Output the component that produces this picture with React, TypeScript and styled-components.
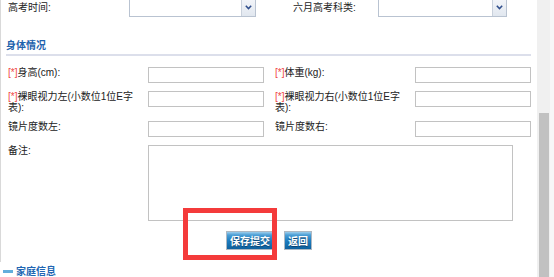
import React from 'react';
import styled, { createGlobalStyle } from 'styled-components';

const GlobalStyle = createGlobalStyle`
    html, body {
        margin: 0;
        padding: 0;
        background: #fff;
        overflow: hidden;
    }

    body {
        font-family: "Liberation Sans", "Noto Sans CJK SC", sans-serif;
        font-size: 10px;
        color: #222;
    }
`;

const Frame = styled.div`
    display: flex;
    width: 554px;
    height: 277px;
    overflow: hidden;
`;

const Content = styled.div`
    position: relative;
    flex: 1;
    min-width: 0;
    overflow: hidden;
`;

// the page is scrolled down a little, so the first row is cut at the top
const Scrolled = styled.div`
    margin-top: -3px;
`;

const Panel = styled.div`
    border-left: 1px solid #d9d9d9;
    padding-bottom: 12px;
`;

const TopRow = styled.div`
    display: grid;
    grid-template-columns: 121px 127px 37px 85px 129px;
    align-items: center;
    padding-left: 7px;
    height: 20px;
`;

const Label = styled.div`
    line-height: 11px;
    white-space: normal;
`;

const SelectBox = styled.div`
    display: flex;
    height: 20px;
    box-sizing: border-box;
    border: 1px solid #b9c3d1;
    background: #fff;
`;

const SelectValue = styled.div`
    flex: 1;
`;

const SelectArrow = styled.div`
    width: 13px;
    display: flex;
    align-items: center;
    justify-content: center;
    border-left: 1px solid #c9d1dc;
    background: linear-gradient(#f4f6fa, #e1e7ef);
`;

const SectionTitle = styled.div`
    margin: 21px 6px 0 5px;
    padding-bottom: 2px;
    border-bottom: 2px solid #dcdfeb;
    color: #1f63ad;
    font-family: "Noto Sans CJK SC", sans-serif;
    font-weight: bold;
    font-size: 10px;
    line-height: 14px;
`;

const FormGrid = styled.div`
    display: grid;
    grid-template-columns: 140px 116px 11px 140px 116px;
    row-gap: 8px;
    align-items: start;
    padding-left: 7px;
    margin-top: 11px;
`;

const Required = styled.span`
    color: #f04848;
`;

const TextInput = styled.div`
    height: 16px;
    box-sizing: border-box;
    border: 1px solid #c2c2c2;
    background: #fff;
`;

const RemarkArea = styled.div`
    grid-column: 2 / span 4;
    width: 365px;
    height: 76px;
    box-sizing: border-box;
    border: 1px solid #c2c2c2;
`;

const Actions = styled.div`
    display: flex;
    justify-content: center;
    gap: 10px;
    margin-top: 10px;
`;

const ActionButton = styled.button<{ $width: number }>`
    width: ${p => p.$width}px;
    height: 19px;
    padding: 0;
    box-sizing: border-box;
    border: 1px solid #aeb8c2;
    background: linear-gradient(#9ccdec 0%, #4b9ed5 18%, #1f7fc2 50%, #0f629f 100%);
    color: #fff;
    font-family: "Noto Sans CJK SC", sans-serif;
    font-weight: bold;
    font-size: 10px;
    line-height: 17px;
    text-shadow: 0 1px 1px #0b3c68;
`;

const SubTitle = styled.div`
    display: flex;
    align-items: center;
    gap: 3px;
    margin-top: 2px;
    padding-left: 3px;
    color: #2166b3;
    font-family: "Noto Sans CJK SC", sans-serif;
    font-weight: bold;
    font-size: 10px;
    line-height: 14px;
`;

const TitleBar = styled.span`
    display: inline-block;
    width: 10px;
    height: 3px;
    background: #62aedc;
`;

const Highlight = styled.div`
    position: absolute;
    left: 183px;
    top: 208px;
    width: 94px;
    height: 52px;
    box-sizing: border-box;
    border: 5px solid #f43b3b;
    pointer-events: none;
`;

const ScrollTrack = styled.div`
    width: 17px;
    display: flex;
    flex-direction: column;
    background: linear-gradient(90deg, #f0f0f0 75%, #f7f7f7 75%);
`;

const ScrollThumb = styled.div`
    margin: 113px 0 0 2px;
    width: 10px;
    flex: 1;
    background: #c1c1c1;
`;

function Select(): React.JSX.Element {
    return <SelectBox>
        <SelectValue />
        <SelectArrow>
            <svg width='7' height='5' viewBox='0 0 7 5'>
                <path d='M0.8 0.8 L3.5 3.6 L6.2 0.8' fill='none' stroke='#2f4d8c' strokeWidth='1.5' />
            </svg>
        </SelectArrow>
    </SelectBox>;
}

interface FieldProps {
    label: string
    required?: boolean
}

function Field(props: FieldProps): React.JSX.Element {
    const { label, required } = props;
    return <>
        <Label>
            {required && <Required>[*]</Required>}
            {label}
        </Label>
        <TextInput />
    </>;
}

export default function App(): React.JSX.Element {
    return <Frame>
        <GlobalStyle />
        <Content>
            <Scrolled>
                <Panel>
                    <TopRow>
                        <Label>高考时间:</Label>
                        <Select />
                        <span />
                        <Label>六月高考科类:</Label>
                        <Select />
                    </TopRow>

                    <SectionTitle>身体情况</SectionTitle>

                    <FormGrid>
                        <Field required label='身高(cm):' />
                        <span />
                        <Field required label='体重(kg):' />

                        <Field required label='裸眼视力左(小数位1位E字表):' />
                        <span />
                        <Field required label='裸眼视力右(小数位1位E字表):' />

                        <Field label='镜片度数左:' />
                        <span />
                        <Field label='镜片度数右:' />

                        <Label>备注:</Label>
                        <RemarkArea />
                    </FormGrid>

                    <Actions>
                        <ActionButton $width={48}>保存提交</ActionButton>
                        <ActionButton $width={28}>返回</ActionButton>
                    </Actions>
                </Panel>

                <SubTitle>
                    <TitleBar />
                    家庭信息
                </SubTitle>
            </Scrolled>
            <Highlight />
        </Content>
        <ScrollTrack>
            <ScrollThumb />
        </ScrollTrack>
    </Frame>;
}
